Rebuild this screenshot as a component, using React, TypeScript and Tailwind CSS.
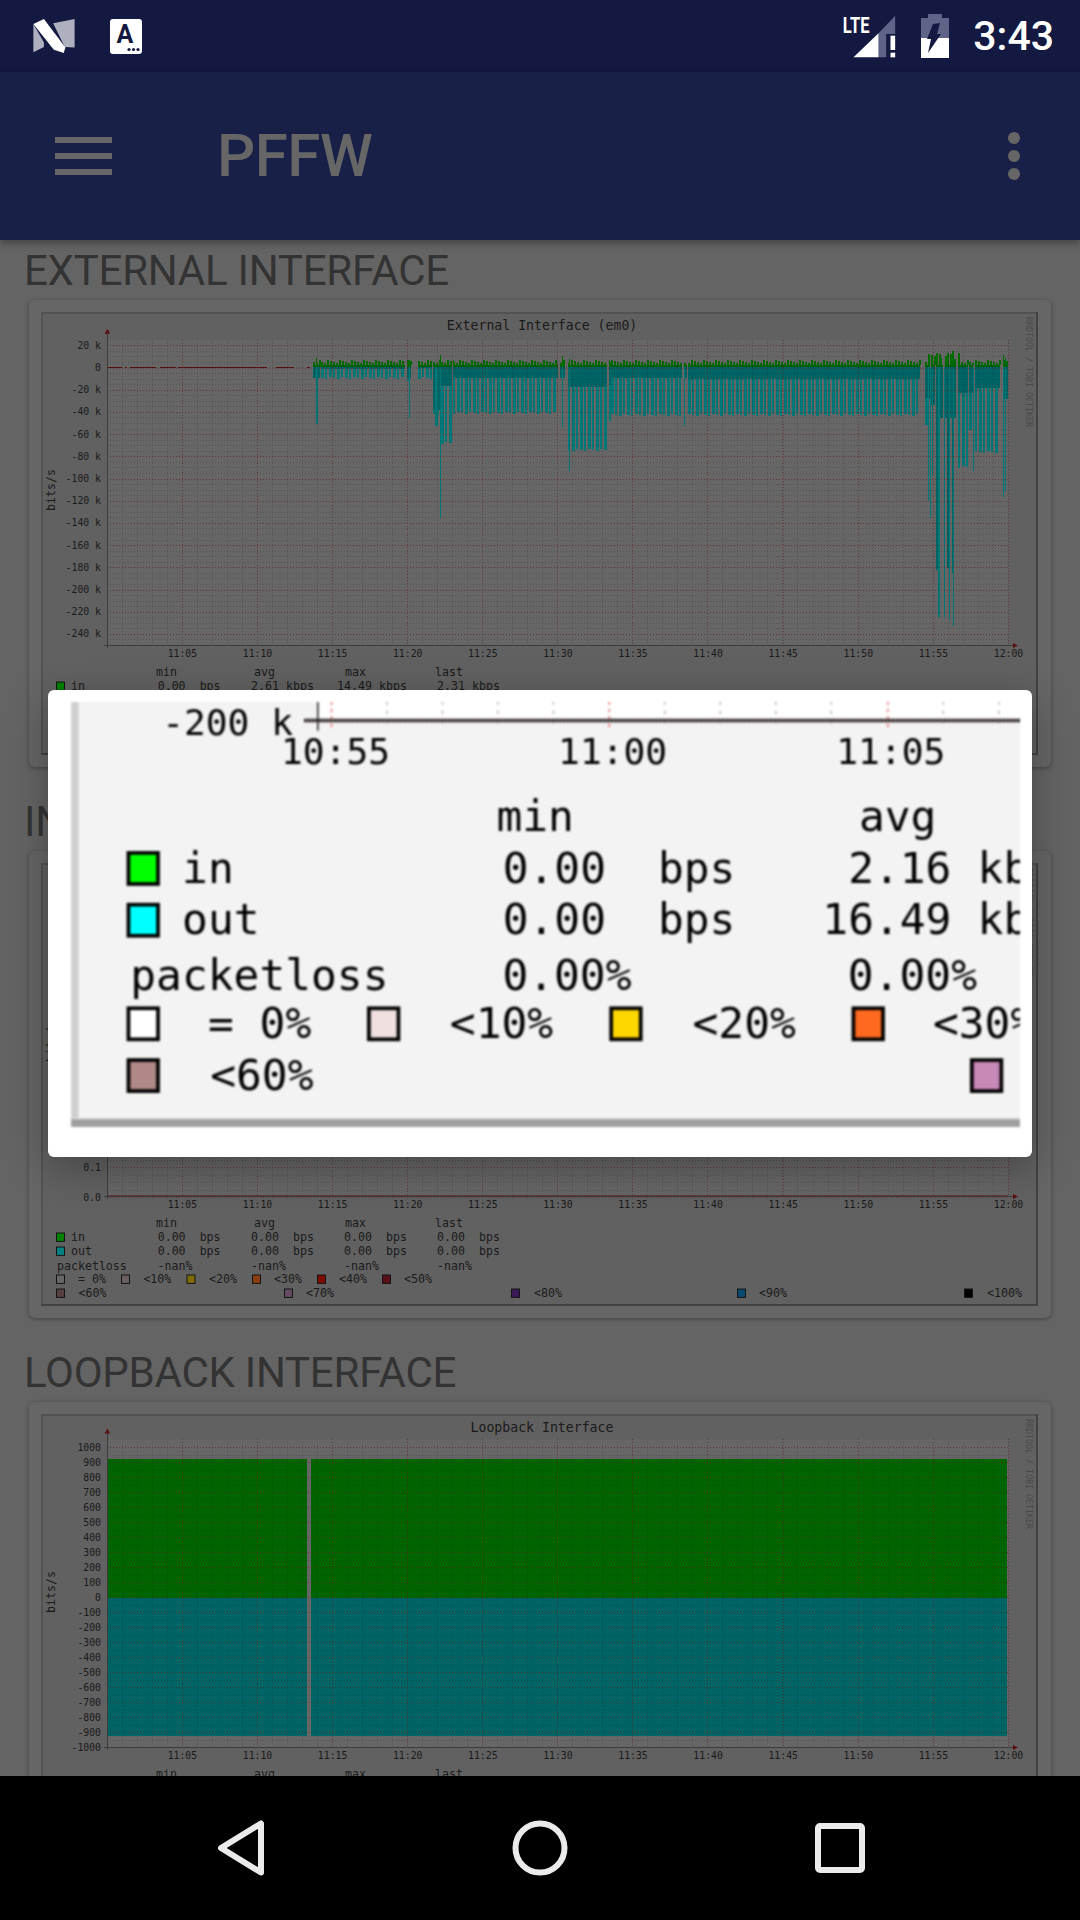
import type { ReactNode } from "react";

const MONO = "DejaVu Sans Mono, monospace";

type Palette = {
  bg: string;
  text: string;
  edgeLight: string;
  edgeDark: string;
  swatchEdge: string;
  in: string;
  out: string;
  levels: string[];
};

const DIMMED: Palette = {
  bg: "#616161",
  text: "#1a1a1a",
  edgeLight: "#525252",
  edgeDark: "#424242",
  swatchEdge: "#141414",
  in: "#008000",
  out: "#008080",
  levels: ["#666666", "#6a5f5f", "#7f6c00", "#8a3d10", "#7f0a00", "#5a1018", "#584040", "#644a62", "#3a1a58", "#0a4a70", "#000000"],
};

const BRIGHT: Palette = {
  bg: "#f3f3f3",
  text: "#000000",
  edgeLight: "#cfcfcf",
  edgeDark: "#9f9f9f",
  swatchEdge: "#000000",
  in: "#00ff00",
  out: "#00ffff",
  levels: ["#ffffff", "#f0e0e0", "#ffd700", "#ff6a20", "#ff1400", "#b42030", "#b08888", "#c888b8", "#74349c", "#1490e0", "#000000"],
};

// value columns of the rrdtool legend, in image pixels
const COLS = [
  { start: 116.6, valueEnd: 144.6, unitEnd: 179.6 },
  { start: 210, valueEnd: 238, unitEnd: 273 },
  { start: 303, valueEnd: 331, unitEnd: 366 },
  { start: 396, valueEnd: 424, unitEnd: 459 },
];

const HEADERS = [
  ["min", 115],
  ["avg", 213],
  ["max", 304],
  ["last", 394],
] as const;

const LEVELS: [number, number, string][] = [
  [15, 37, "= 0%"],
  [80, 102.4, "<10%"],
  [145.5, 168, "<20%"],
  [211, 233, "<30%"],
  [276, 298, "<40%"],
  [341, 363, "<50%"],
  [15, 37.6, "<60%"],
  [243, 265, "<70%"],
  [470, 493, "<80%"],
  [696, 718, "<90%"],
  [923, 946, "<100%"],
];

const AXIS_FONT = 9.8;

type Reading = [string, string];

function T({ x, y, children, fill, anchor, size = 11.6, length }: { x: number; y: number; children: ReactNode; fill: string; anchor?: "end" | "middle"; size?: number; length?: number }) {
  return (
    <text x={x} y={y} fill={fill} fontFamily={MONO} fontSize={size} textAnchor={anchor} textLength={length}>
      {children}
    </text>
  );
}

function Legend({ p, inRow, outRow, loss }: { p: Palette; inRow: Reading[]; outRow: Reading[]; loss: string[] }) {
  const swatch = (x: number, y: number, fill: string) => (
    <rect x={x + 0.5} y={y - 4} width={8} height={8.4} fill={fill} stroke={p.swatchEdge} strokeWidth={1} />
  );
  const row = (y: number, values: Reading[]) =>
    values.map(([value, unit], i) => (
      <g key={i}>
        <T x={COLS[i].valueEnd} y={y} fill={p.text} anchor="end">{value}</T>
        <T x={COLS[i].unitEnd} y={y} fill={p.text} anchor="end">{unit}</T>
      </g>
    ));
  return (
    <g>
      {HEADERS.map(([label, x]) => (
        <T key={label} x={x} y={364} fill={p.text}>{label}</T>
      ))}
      {swatch(15, 374, p.in)}
      <T x={30} y={378} fill={p.text}>in</T>
      {row(378, inRow)}
      {swatch(15, 388, p.out)}
      <T x={30} y={392} fill={p.text}>out</T>
      {row(392, outRow)}
      <T x={16} y={407} fill={p.text}>packetloss</T>
      {loss.map((value, i) => (
        <T key={i} x={COLS[i].start} y={407} fill={p.text}>{value}</T>
      ))}
      {LEVELS.map(([sx, tx, label], i) => {
        const y = i < 6 ? 416 : 430;
        return (
          <g key={label}>
            {swatch(sx, y, p.levels[i])}
            <T x={tx} y={y + 4} fill={p.text}>{label}</T>
          </g>
        );
      })}
    </g>
  );
}

function Frame({ p }: { p: Palette }) {
  return (
    <>
      <rect x={0} y={0} width={997} height={2} fill={p.edgeLight} />
      <rect x={0} y={0} width={2} height={443} fill={p.edgeLight} />
      <rect x={0} y={441} width={997} height={2} fill={p.edgeDark} />
      <rect x={995} y={0} width={2} height={443} fill={p.edgeDark} />
    </>
  );
}

type GraphProps = {
  title: string;
  ticks: [string, number][];
  minorDiv?: number;
  inRow: Reading[];
  outRow: Reading[];
  loss: string[];
  children?: ReactNode;
};

const X_LABELS = ["11:05", "11:10", "11:15", "11:20", "11:25", "11:30", "11:35", "11:40", "11:45", "11:50", "11:55", "12:00"];
const PLOT_LEFT = 66;
const PLOT_RIGHT = 967;
const AXIS_Y = 333;

function Graph({ title, ticks, minorDiv = 4, inRow, outRow, loss, children }: GraphProps) {
  const step = Math.abs(ticks[1][1] - ticks[0][1]);
  const top = ticks[0][1] - step / minorDiv;
  const minorY: number[] = [];
  for (let y = ticks[0][1]; y < AXIS_Y; y += step / minorDiv) minorY.push(Math.round(y) + 0.5);
  const minorX: number[] = [];
  for (let x = 80.6; x <= PLOT_RIGHT; x += 15.02) minorX.push(Math.round(x) + 0.5);
  return (
    <svg width={997} height={443} viewBox="0 0 997 443" className="block">
      <rect width={997} height={443} fill={DIMMED.bg} />
      <rect x={PLOT_LEFT} y={top} width={PLOT_RIGHT - PLOT_LEFT} height={AXIS_Y - top} fill="#666666" />
      {children}
      <g shapeRendering="crispEdges">
        {minorY.map((y) => (
          <line key={y} x1={PLOT_LEFT} x2={PLOT_RIGHT} y1={y} y2={y} stroke="#000" strokeOpacity={0.16} strokeDasharray="1 2" />
        ))}
        {minorX.map((x) => (
          <line key={x} x1={x} x2={x} y1={top} y2={AXIS_Y} stroke="#000" strokeOpacity={0.16} strokeDasharray="1 2" />
        ))}
        {X_LABELS.map((_, i) => {
          const x = Math.round(140.7 + 75.1 * i) + 0.5;
          return <line key={i} x1={x} x2={x} y1={top} y2={AXIS_Y} stroke="#702020" strokeOpacity={0.55} strokeDasharray="1 2" />;
        })}
        {ticks.map(([label, y]) => (
          <line key={label} x1={PLOT_LEFT} x2={PLOT_RIGHT} y1={Math.round(y) + 0.5} y2={Math.round(y) + 0.5} stroke="#702020" strokeOpacity={0.6} strokeDasharray="1 2" />
        ))}
        <line x1={PLOT_LEFT + 0.5} x2={PLOT_LEFT + 0.5} y1={top - 6} y2={AXIS_Y + 3} stroke="#3c3c3c" />
        <line x1={PLOT_LEFT - 3} x2={PLOT_RIGHT + 6} y1={AXIS_Y + 0.5} y2={AXIS_Y + 0.5} stroke="#3c3c3c" />
      </g>
      <polygon points={`${PLOT_LEFT - 2.5},${top - 6} ${PLOT_LEFT + 3},${top - 6} ${PLOT_LEFT + 0.5},${top - 11}`} fill="#5a1010" />
      <polygon points={`${PLOT_RIGHT + 5},${AXIS_Y - 2} ${PLOT_RIGHT + 5},${AXIS_Y + 3} ${PLOT_RIGHT + 10},${AXIS_Y + 0.5}`} fill="#5a1010" />

      <T x={501} y={18} fill={DIMMED.text} anchor="middle" size={13.2}>{title}</T>
      <g transform="translate(14 178) rotate(-90)">
        <T x={0} y={0} fill={DIMMED.text} anchor="middle">bits/s</T>
      </g>
      <g transform="translate(985 5) rotate(90)">
        <T x={0} y={0} fill="#4a4a4a" size={8.3} length={110}>RRDTOOL / TOBI OETIKER</T>
      </g>
      {ticks.map(([label, y]) => (
        <T key={label} x={60} y={y + 3.5} fill={DIMMED.text} anchor="end" size={AXIS_FONT}>{label}</T>
      ))}
      {X_LABELS.map((label, i) => (
        <T key={label} x={141.4 + 75.1 * i} y={345} fill={DIMMED.text} anchor="middle" size={AXIS_FONT}>{label}</T>
      ))}
      <Legend p={DIMMED} inRow={inRow} outRow={outRow} loss={loss} />
      <Frame p={DIMMED} />
    </svg>
  );
}

// outgoing traffic of the first graph, [x1, x2, solid bottom, teeth bottom] in page pixels
const OUT_BLOCKS = [
  [313, 320, 378, 378],
  [321, 405, 369, 378],
  [407, 411, 378, 381],
  [418, 432, 368, 378],
  [433, 440, 410, 415],
  [441, 452, 386, 443],
  [453, 558, 378, 413],
  [560, 565, 378, 378],
  [568, 607, 387, 450],
  [609, 611, 385, 420],
  [611, 682, 378, 415],
  [684, 687, 378, 378],
  [688, 920, 379, 415],
  [925, 930, 398, 425],
  [931, 935, 405, 405],
  [936, 940, 570, 570],
  [940, 943, 418, 418],
  [945, 947, 418, 418],
  [947, 950, 568, 568],
  [950, 952, 418, 418],
  [952, 954, 573, 573],
  [954, 956, 418, 418],
  [958, 968, 393, 467],
  [969, 973, 393, 429],
  [975, 1000, 388, 452],
  [1003, 1008, 399, 399],
];

const OUT_SPIKES = [
  [316, 424, 2],
  [409, 418, 1],
  [435, 426, 3],
  [440, 518, 1],
  [562, 428, 1],
  [569, 471, 1],
  [684, 426, 1],
  [928, 501, 1],
  [930, 518, 1],
  [932, 476, 1],
  [938, 617, 2],
  [944, 617, 1],
  [949, 620, 1],
  [953, 626, 1],
  [973, 471, 1],
  [1003, 497, 1],
  [1005, 491, 1],
];

const IN_SPIKES = [
  [316, 358],
  [320, 360],
  [409, 360],
  [440, 355],
  [453, 360],
  [562, 356],
  [569, 359],
  [609, 360],
  [1003, 355],
  [1005, 358],
];

function ExternalTraffic() {
  const zero = 55;
  const rects: ReactNode[] = [];
  let n = 0;
  for (const [x1, x2, solid, teeth] of OUT_BLOCKS) {
    rects.push(<rect key={`s${x1}`} x={x1 - 41} y={zero} width={x2 - x1} height={solid - 312 - zero} fill="#006464" />);
    if (teeth > solid) {
      for (let x = x1; x + 2 <= x2; x += 4) {
        n += 1;
        rects.push(<rect key={`t${x}`} x={x - 41} y={solid - 312} width={2 + (n % 2)} height={teeth - solid + (n % 3) - 1} fill="#007878" />);
      }
    }
  }
  for (const [x, bottom, w] of OUT_SPIKES) {
    rects.push(<rect key={`p${x}`} x={x - 41} y={zero} width={w} height={bottom - 312 - zero} fill="#007878" />);
  }
  for (const [x1, x2] of OUT_BLOCKS) {
    rects.push(<rect key={`g${x1}`} x={x1 - 41} y={zero - 2} width={x2 - x1} height={2} fill="#006000" />);
    for (let x = x1; x < x2; x += 3) {
      const tall = x > 925 && x < 960;
      const h = tall ? 5 + ((x * 7) % 11) : 2 + ((x * 13) % 4);
      rects.push(<rect key={`i${x}`} x={x - 41} y={zero - 2 - h} width={2} height={h} fill="#006c00" />);
    }
  }
  for (const [x, top] of IN_SPIKES) {
    rects.push(<rect key={`j${x}`} x={x - 41} y={top - 312} width={1} height={367 - top} fill="#006c00" />);
  }
  return (
    <g shapeRendering="crispEdges">
      {[[67, 81], [84, 86], [89, 115], [119, 135], [137, 226], [235, 253], [266, 269]].map(([a, b]) => (
        <rect key={a} x={a} y={zero - 0.5} width={b - a} height={1} fill="#5c0f0f" />
      ))}
      {rects}
    </g>
  );
}

function LoopbackTraffic() {
  return (
    <g shapeRendering="crispEdges">
      <rect x={66} y={45} width={200} height={138.5} fill="#006400" />
      <rect x={270} y={45} width={696} height={138.5} fill="#006400" />
      <rect x={66} y={183.5} width={200} height={138.5} fill="#006464" />
      <rect x={270} y={183.5} width={696} height={138.5} fill="#006464" />
    </g>
  );
}

const externalTicks: [string, number][] = [
  "20 k", "0", "-20 k", "-40 k", "-60 k", "-80 k", "-100 k", "-120 k", "-140 k", "-160 k", "-180 k", "-200 k", "-220 k", "-240 k",
].map((label, i) => [label, 33.3 + 22.2 * i]);

const internalTicks: [string, number][] = ["1.0", "0.9", "0.8", "0.7", "0.6", "0.5", "0.4", "0.3", "0.2", "0.1", "0.0"].map((label, i) => [label, 38 + 29.6 * i]);

const loopbackTicks: [string, number][] = Array.from({ length: 21 }, (_, i) => [String(1000 - i * 100), 33 + 15.02 * i]);

const IDLE: Reading[] = [["0.00", "bps"], ["0.00", "bps"], ["0.00", "bps"], ["0.00", "bps"]];
const NO_LOSS = ["-nan%", "-nan%", "-nan%", "-nan%"];

function Section({ title, children }: { title: string; children: ReactNode }) {
  return (
    <section className="mb-[24px]">
      <h2 className="h-[60px] pl-[24px] text-[42px] leading-[62px] font-normal tracking-[-0.25px] text-[#333333]">{title}</h2>
      <div className="mx-[29px] rounded-[6px] bg-[#666666] p-3 shadow-[0_1px_4px_rgba(0,0,0,0.35)]">{children}</div>
    </section>
  );
}

// the tapped graph, cropped and blown up 3.7x
function ZoomedGraph() {
  const majors = [70.4, 145.5, 220.8];
  const minors = [85.4, 100.4, 115.4, 130.4, 160.5, 175.5, 190.5, 205.5, 235.8, 250.8];
  const inRow: Reading[] = [["0.00", "bps"], ["2.16", "kbps"], ["9.80", "kbps"], ["1.20", "kbps"]];
  const outRow: Reading[] = [["0.00", "bps"], ["16.49", "kbps"], ["88.10", "kbps"], ["9.40", "kbps"]];
  return (
    <svg width={949} height={425} viewBox="0 329.2 256.5 114.9" className="block blur-[0.8px]">
      <rect x={0} y={320} width={260} height={130} fill={BRIGHT.bg} />
      <rect x={67} y={320} width={200} height={14} fill="#ffffff" />
      {minors.map((x) => (
        <line key={x} x1={x} x2={x} y1={329} y2={336} stroke="#b8b8b8" strokeWidth={0.4} strokeDasharray="1 1.5" />
      ))}
      {majors.map((x) => (
        <line key={x} x1={x} x2={x} y1={329} y2={337} stroke="#f08080" strokeWidth={0.45} strokeDasharray="1 1" />
      ))}
      <line x1={63} x2={260} y1={334.2} y2={334.2} stroke="#6a5a5a" strokeWidth={0.9} />
      <line x1={63} x2={260} y1={334.2} y2={334.2} stroke="#2a2a2a" strokeWidth={0.9} strokeDasharray="0.5 0.5" />
      <line x1={66.7} x2={66.7} y1={329} y2={337} stroke="#333333" strokeWidth={0.45} />
      <T x={60} y={338} fill={BRIGHT.text} anchor="end" size={AXIS_FONT}>-200 k</T>
      <T x={71.5} y={346} fill={BRIGHT.text} anchor="middle" size={AXIS_FONT}>10:55</T>
      <T x={146.4} y={346} fill={BRIGHT.text} anchor="middle" size={AXIS_FONT}>11:00</T>
      <T x={221.6} y={346} fill={BRIGHT.text} anchor="middle" size={AXIS_FONT}>11:05</T>
      <Legend p={BRIGHT} inRow={inRow} outRow={outRow} loss={["0.00%", "0.00%", "0.00%", "0.00%"]} />
      <rect x={0} y={320} width={2} height={125} fill={BRIGHT.edgeLight} />
      <rect x={0} y={441.6} width={260} height={0.4} fill="#dedede" />
      <rect x={0} y={442} width={260} height={2.2} fill={BRIGHT.edgeDark} />
    </svg>
  );
}

function StatusBar() {
  return (
    <div className="flex h-[72px] shrink-0 items-center bg-[#131940] pl-[33px] pr-[26px] [font-family:Roboto,sans-serif]">
      <svg width={42} height={34} viewBox="40 27 125 103">
        <polygon points="40,42 72,98 72,112 40,128" fill="#aeb0c0" />
        <polygon points="100,40 165,27 165,113 135,112" fill="#aeb0c0" />
        <polygon points="40,42 72,27 137,113 132,130 102,120" fill="#ffffff" />
      </svg>
      <svg width={32} height={35} viewBox="0 0 32 35" className="ml-[35px]">
        <rect width={32} height={35} rx={3} fill="#ffffff" />
        <text x={15} y={24} fontFamily="Roboto, sans-serif" fontWeight={700} fontSize={25} fill="#131940" textAnchor="middle">A</text>
        <circle cx={19} cy={30.5} r={1.6} fill="#131940" />
        <circle cx={23.5} cy={30.5} r={1.6} fill="#131940" />
        <circle cx={28} cy={30.5} r={1.6} fill="#131940" />
      </svg>
      <div className="ml-auto flex items-center">
        <svg width={57} height={45} viewBox="70 40 170 135">
          <text x={75} y={97} fontFamily="Roboto, sans-serif" fontWeight={700} fontSize={68} textLength={80} lengthAdjust="spacingAndGlyphs" fill="#ffffff">LTE</text>
          <polygon points="182,98 232,45 232,100 205,100 205,170 182,170" fill="#5f6388" />
          <polygon points="107,170 182,98 182,170" fill="#ffffff" />
          <rect x={218} y={105} width={14} height={43} fill="#ffffff" />
          <rect x={218} y={156} width={14} height={14} fill="#ffffff" />
        </svg>
        <svg width={28} height={44} viewBox="0 0 28 44" className="ml-[23px]">
          <path d="M7 0h14v4h7v20H0V4h7z" fill="#5f6388" />
          <rect x={0} y={24} width={28} height={20} fill="#ffffff" />
          <polygon points="12,10 19,9 16,20 20,20 7,39 10,25 6,25" fill="#131940" />
        </svg>
        <span className="ml-[24px] text-[41px] leading-none font-medium text-white">3:43</span>
      </div>
    </div>
  );
}

function AppBar() {
  return (
    <header className="relative z-10 flex h-[168px] shrink-0 items-center bg-[#192048] pl-[55px] pr-[60px] shadow-[0_3px_8px_rgba(0,0,0,0.35)] [font-family:Roboto,sans-serif]">
      <div className="flex w-[57px] flex-col gap-[10px]">
        <div className="h-[6px] bg-[#666666]" />
        <div className="h-[6px] bg-[#666666]" />
        <div className="h-[6px] bg-[#666666]" />
      </div>
      <h1 className="ml-[105px] text-[60px] leading-none font-medium tracking-[-0.5px] text-[#666666]">PFFW</h1>
      <div className="ml-auto flex flex-col gap-[6px]">
        <div className="size-3 rounded-full bg-[#666666]" />
        <div className="size-3 rounded-full bg-[#666666]" />
        <div className="size-3 rounded-full bg-[#666666]" />
      </div>
    </header>
  );
}

function NavBar() {
  return (
    <nav className="relative z-10 flex h-[144px] shrink-0 items-center justify-center bg-black">
      <div className="flex w-[300px] justify-center">
        <svg width={60} height={60} viewBox="0 0 60 60" fill="none" stroke="#ebebeb" strokeWidth={6} strokeLinejoin="round">
          <polygon points="11,30 51,5.5 51,54.5" />
        </svg>
      </div>
      <div className="flex w-[300px] justify-center">
        <svg width={60} height={60} viewBox="0 0 60 60" fill="none" stroke="#ebebeb" strokeWidth={6}>
          <circle cx={30} cy={30} r={24.5} />
        </svg>
      </div>
      <div className="flex w-[300px] justify-center">
        <svg width={50} height={50} viewBox="0 0 50 50" fill="none" stroke="#ebebeb" strokeWidth={6}>
          <rect x={3} y={3} width={44} height={44} rx={2} />
        </svg>
      </div>
    </nav>
  );
}

export default function App() {
  return (
    <div className="relative flex h-[1920px] w-[1080px] flex-col overflow-hidden bg-[#646464]">
      <StatusBar />
      <AppBar />
      <main className="min-h-0 flex-1 overflow-hidden [font-family:Roboto,sans-serif]">
        <Section title="EXTERNAL INTERFACE">
          <Graph
            title="External Interface (em0)"
            ticks={externalTicks}
            inRow={[["0.00", "bps"], ["2.61", "kbps"], ["14.49", "kbps"], ["2.31", "kbps"]]}
            outRow={[["0.00", "bps"], ["21.94", "kbps"], ["231.20", "kbps"], ["20.71", "kbps"]]}
            loss={["0.00%", "0.00%", "0.00%", "0.00%"]}
          >
            <ExternalTraffic />
          </Graph>
        </Section>
        <Section title="INTERNAL INTERFACE">
          <Graph title="Internal Interface (em1)" ticks={internalTicks} inRow={IDLE} outRow={IDLE} loss={NO_LOSS}>
            <rect x={66} y={332.5} width={901} height={1} fill="#5c0f0f" />
          </Graph>
        </Section>
        <Section title="LOOPBACK INTERFACE">
          <Graph title="Loopback Interface" ticks={loopbackTicks} minorDiv={2} inRow={IDLE} outRow={IDLE} loss={NO_LOSS}>
            <LoopbackTraffic />
          </Graph>
        </Section>
      </main>
      <NavBar />

      {/* enlarged graph dialog */}
      <div className="absolute left-[48px] top-[690px] z-20 h-[467px] w-[984px] rounded-[6px] bg-white pl-[23px] pt-3 shadow-[0_10px_40px_rgba(0,0,0,0.3)]">
        <ZoomedGraph />
      </div>
    </div>
  );
}
